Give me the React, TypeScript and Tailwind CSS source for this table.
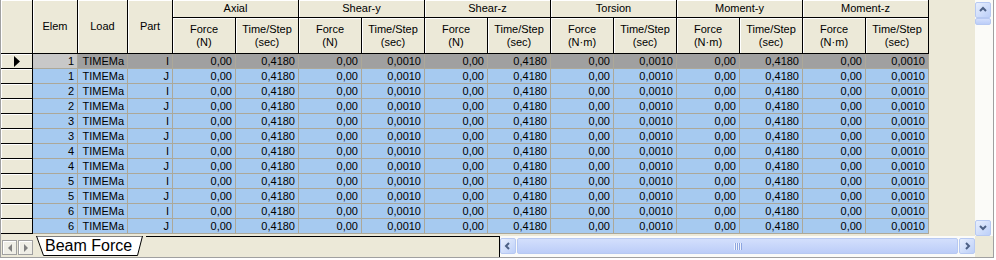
import { Fragment, type ReactNode } from "react";

const groups = [
  { name: "Axial", unit: "N", time: "0,4180" },
  { name: "Shear-y", unit: "N", time: "0,0010" },
  { name: "Shear-z", unit: "N", time: "0,4180" },
  { name: "Torsion", unit: "N·m", time: "0,0010" },
  { name: "Moment-y", unit: "N·m", time: "0,4180" },
  { name: "Moment-z", unit: "N·m", time: "0,0010" },
];

const rows = Array.from({ length: 12 }, (_, i) => ({
  elem: Math.floor(i / 2) + 1,
  part: i % 2 ? "J" : "I",
}));

const cols = "grid grid-cols-[32px_45px_50px_45px_repeat(12,63px)]";
const head =
  "flex items-center justify-center border-r border-b border-black bg-[#ECE9D8] text-center leading-[13px] shadow-[inset_1px_1px_0_#fff]";

const Chevron = ({ dir }: { dir: "up" | "down" | "left" | "right" }) => {
  const pts = {
    up: "3,7 6,4 9,7",
    down: "3,4 6,7 9,4",
    left: "7,3 4,6 7,9",
    right: "5,3 8,6 5,9",
  }[dir];
  return (
    <svg width="12" height="12" viewBox="0 0 12 12">
      <polyline points={pts} fill="none" stroke="#4D6185" strokeWidth="2" />
    </svg>
  );
};

const ScrollButton = ({ dir }: { dir: "up" | "down" | "left" | "right" }) => (
  <div className="flex h-[16px] w-[16px] shrink-0 items-center justify-center rounded-[2px] border border-[#B7C9F2] bg-gradient-to-br from-[#E8EFFD] to-[#BCCFF8]">
    <Chevron dir={dir} />
  </div>
);

const Cell = ({ children, className = "" }: { children?: ReactNode; className?: string }) => (
  <div className={`truncate border-r border-b border-[#ACA899] pr-[3px] text-right leading-[14px] ${className}`}>
    {children}
  </div>
);

export default function App() {
  return (
    <div className="h-[260px] w-[996px] bg-white font-['Liberation_Sans',Arial,sans-serif] text-[11px] text-black">
      <div className="flex h-[258px] w-[994px] flex-col border-x border-b border-[#A0A0A0] bg-[#ECE9D8]">
        <div className="flex h-[236px]">
          <div className="w-[974px] overflow-hidden">
            {/* header */}
            <div className={`${cols} grid-rows-[18px_36px]`}>
              <div className={`${head} row-span-2`} />
              <div className={`${head} row-span-2`}>Elem</div>
              <div className={`${head} row-span-2`}>Load</div>
              <div className={`${head} row-span-2`}>Part</div>
              {groups.map((g) => (
                <div key={g.name} className={`${head} col-span-2`}>
                  {g.name}
                </div>
              ))}
              {groups.map((g) => (
                <Fragment key={g.name}>
                  <div className={head}>
                    Force
                    <br />({g.unit})
                  </div>
                  <div className={head}>
                    Time/Step
                    <br />
                    (sec)
                  </div>
                </Fragment>
              ))}
            </div>
            {/* body */}
            {rows.map((r, i) => {
              const first = i === 0;
              const bg = first ? "bg-[#A0A0A0]" : "bg-[#A6CAF0]";
              return (
                <div key={i} className={`${cols} h-[15px]`}>
                  <div className="flex items-center border-r border-b border-black bg-[#ECE9D8] pl-[13px] shadow-[inset_1px_1px_0_#fff]">
                    {first && (
                      <svg width="7" height="11" viewBox="0 0 7 11">
                        <polygon points="0,0 6,5.5 0,11" fill="#000" />
                      </svg>
                    )}
                  </div>
                  <Cell className={first ? "bg-[#C8C8C8]" : bg}>{r.elem}</Cell>
                  <Cell className={`${bg} pl-[2px] text-left`}>TIMEMa</Cell>
                  <Cell className={bg}>{r.part}</Cell>
                  {groups.map((g) => (
                    <Fragment key={g.name}>
                      <Cell className={bg}>0,00</Cell>
                      <Cell className={bg}>{g.time}</Cell>
                    </Fragment>
                  ))}
                </div>
              );
            })}
          </div>
          {/* vertical scrollbar */}
          <div className="flex w-[18px] flex-col bg-[#FBFBF8] pt-[2px]">
            <ScrollButton dir="up" />
            <div className="h-[7px] w-[16px] rounded-[2px] border border-[#B7C9F2] bg-gradient-to-b from-[#D3DFFC] to-[#BCCDF8]" />
            <div className="flex-1" />
            <ScrollButton dir="down" />
          </div>
        </div>
        {/* bottom bar */}
        <div className="flex h-[21px]">
          <div className="flex w-[499px]">
            <div className="flex gap-px pl-px pt-[4px]">
              {["M6,2 L2,6 L6,10 Z", "M2,2 L6,6 L2,10 Z"].map((d) => (
                <div
                  key={d}
                  className="flex h-[15px] w-[15px] items-center justify-center border border-[#A0A0A0] bg-[#EFEEE6] shadow-[inset_1px_1px_0_#fff]"
                >
                  <svg width="8" height="12" viewBox="0 0 8 12">
                    <path d={d} fill="#808080" />
                  </svg>
                </div>
              ))}
            </div>
            <div className="relative ml-[3px] h-[20px] w-[110px] shrink-0">
              <svg className="absolute inset-0" width="110" height="20" viewBox="0 0 110 20">
                <polygon points="0.5,0 7.5,19.5 101.5,19.5 106.5,0" fill="#fff" stroke="#000" />
              </svg>
              <span className="relative block pl-[9px] pt-[1px] text-[16px] leading-[18px]">Beam Force</span>
            </div>
            <div className="flex-1 border-t border-r border-black" />
          </div>
          <div className="flex w-[475px] gap-px bg-[#FBFBF8] pt-[2px]">
            <ScrollButton dir="left" />
            <div className="flex h-[16px] flex-1 items-center justify-center rounded-[2px] border border-[#B7C9F2] bg-gradient-to-b from-[#D3DFFC] to-[#BCCDF8]">
              <svg width="8" height="7" viewBox="0 0 8 7">
                <path d="M0.5,0 V7 M2.5,0 V7 M4.5,0 V7 M6.5,0 V7" stroke="#EEF2FD" />
                <path d="M1.5,0 V7 M3.5,0 V7 M5.5,0 V7 M7.5,0 V7" stroke="#8CA5E0" />
              </svg>
            </div>
            <ScrollButton dir="right" />
          </div>
          <div className="flex-1" />
        </div>
      </div>
    </div>
  );
}
